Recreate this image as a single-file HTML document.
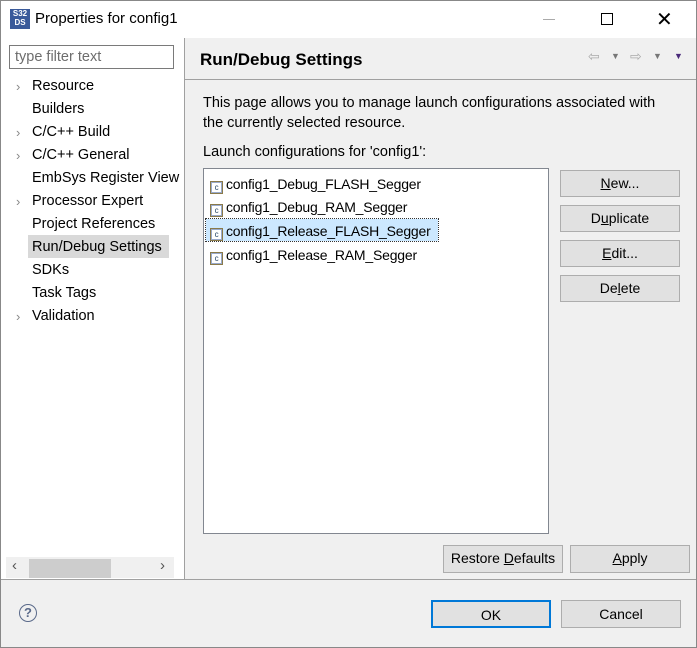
<!DOCTYPE html>
<html><head><style>
body{margin:0;width:697px;height:648px;position:relative;background:#f0f0f0;font-family:"Liberation Sans",sans-serif;font-size:14px;color:#000;overflow:hidden}
.a{position:absolute}
.btn{position:absolute;background:#e1e1e1;border:1px solid #adadad;box-sizing:border-box;text-align:center;font-size:14px;line-height:25px}
.ti{position:absolute;left:32px;font-size:14.5px;line-height:20px}
.ar{position:absolute;left:16px;color:#888;font-size:13px}
.it{position:absolute;left:6px;font-size:14px;letter-spacing:-0.2px;line-height:20px;white-space:nowrap}
.ic{display:inline-block;width:11px;height:11px;border:1px solid #8a7a4a;background:#fff;vertical-align:-1px;margin-right:3px;font-size:8px;line-height:11px;text-align:center;color:#246;box-shadow:inset 0 0 0 1px #9ac}
</style></head><body>
<div class="a" style="left:0;top:0;width:697px;height:38px;background:#fff"></div>
<div class="a" style="left:10px;top:9px;width:20px;height:20px;background:#3a5a9a;color:#fff;font-size:8px;line-height:9px;text-align:center;font-weight:bold">S32<br>DS</div>
<div class="a" style="left:35px;top:10px;font-size:15px">Properties for config1</div>
<div class="a" style="left:543px;top:19px;width:12px;height:1px;background:#aaa"></div>
<div class="a" style="left:601px;top:13px;width:10px;height:10px;border:1px solid #000"></div>
<div class="a" style="left:656px;top:7px;font-size:20px;font-weight:300">✕</div>
<div class="a" style="left:0;top:38px;width:184px;height:541px;background:#fff"></div>
<div class="a" style="left:184px;top:38px;width:1px;height:541px;background:#a0a0a0"></div>
<div class="a" style="left:9px;top:45px;width:165px;height:24px;border:1px solid #7a7a7a;box-sizing:border-box;color:#6d6d6d;font-size:14.5px;line-height:22px;padding-left:5px">type filter text</div>
<div class="a" style="left:28px;top:235px;width:141px;height:23px;background:#d9d9d9"></div>
<div class="ar" style="top:79px">›</div><div class="ti" style="top:76px">Resource</div>
<div class="ti" style="top:99px">Builders</div>
<div class="ar" style="top:125px">›</div><div class="ti" style="top:122px">C/C++ Build</div>
<div class="ar" style="top:148px">›</div><div class="ti" style="top:145px">C/C++ General</div>
<div class="ti" style="top:168px;white-space:nowrap">EmbSys Register View</div>
<div class="ar" style="top:194px">›</div><div class="ti" style="top:191px">Processor Expert</div>
<div class="ti" style="top:214px">Project References</div>
<div class="ti" style="top:237px">Run/Debug Settings</div>
<div class="ti" style="top:260px">SDKs</div>
<div class="ti" style="top:283px">Task Tags</div>
<div class="ar" style="top:309px">›</div><div class="ti" style="top:306px">Validation</div>
<div class="a" style="left:6px;top:557px;width:168px;height:21px;background:#f0f0f0"></div>
<div class="a" style="left:29px;top:559px;width:82px;height:19px;background:#cdcdcd"></div>
<div class="a" style="left:12px;top:557px;color:#555;font-size:15px">‹</div>
<div class="a" style="left:160px;top:557px;color:#555;font-size:15px">›</div>
<div class="a" style="left:200px;top:50px;font-size:17px;font-weight:bold">Run/Debug Settings</div>
<div class="a" style="left:588px;top:48px;color:#aaa;font-size:14px">⇦</div>
<div class="a" style="left:611px;top:51px;color:#777;font-size:9px">▼</div>
<div class="a" style="left:630px;top:48px;color:#aaa;font-size:14px">⇨</div>
<div class="a" style="left:653px;top:51px;color:#777;font-size:9px">▼</div>
<div class="a" style="left:674px;top:51px;color:#4a2a7a;font-size:9px">▼</div>
<div class="a" style="left:185px;top:79px;width:512px;height:1px;background:#a0a0a0"></div>
<div class="a" style="left:203px;top:93px;font-size:14.5px;line-height:20px">This page allows you to manage launch configurations associated with<br>the currently selected resource.</div>
<div class="a" style="left:203px;top:144px;font-size:14.5px">Launch configurations for 'config1':</div>
<div class="a" style="left:203px;top:168px;width:346px;height:366px;background:#fff;border:1px solid #828790;box-sizing:border-box">
<div class="a" style="left:2px;top:50px;width:232px;height:22px;background:#cce8ff;outline:1px dotted #333"></div>
<div class="it" style="top:5px"><span class="ic">c</span>config1_Debug_FLASH_Segger</div>
<div class="it" style="top:28px"><span class="ic">c</span>config1_Debug_RAM_Segger</div>
<div class="it" style="top:52px"><span class="ic">c</span>config1_Release_FLASH_Segger</div>
<div class="it" style="top:76px"><span class="ic">c</span>config1_Release_RAM_Segger</div>
</div>
<div class="btn" style="left:560px;top:170px;width:120px;height:27px"><u>N</u>ew...</div>
<div class="btn" style="left:560px;top:205px;width:120px;height:27px">D<u>u</u>plicate</div>
<div class="btn" style="left:560px;top:240px;width:120px;height:27px"><u>E</u>dit...</div>
<div class="btn" style="left:560px;top:275px;width:120px;height:27px">De<u>l</u>ete</div>
<div class="btn" style="left:443px;top:545px;width:120px;height:28px">Restore <u>D</u>efaults</div>
<div class="btn" style="left:570px;top:545px;width:120px;height:28px"><u>A</u>pply</div>
<div class="a" style="left:0;top:579px;width:697px;height:1px;background:#a0a0a0"></div>
<div class="a" style="left:19px;top:604px;width:18px;height:18px;border:1.5px solid #5a6a8a;border-radius:50%;box-sizing:border-box;text-align:center;color:#5a6a8a;font-size:13px;line-height:16px;font-weight:bold">?</div>
<div class="btn" style="left:431px;top:600px;width:120px;height:28px;border:2px solid #0078d7;line-height:26px">OK</div>
<div class="btn" style="left:561px;top:600px;width:120px;height:28px;line-height:27px">Cancel</div>
<div class="a" style="left:0;top:0;width:697px;height:648px;border:1px solid #888;box-sizing:border-box"></div>
</body></html>
